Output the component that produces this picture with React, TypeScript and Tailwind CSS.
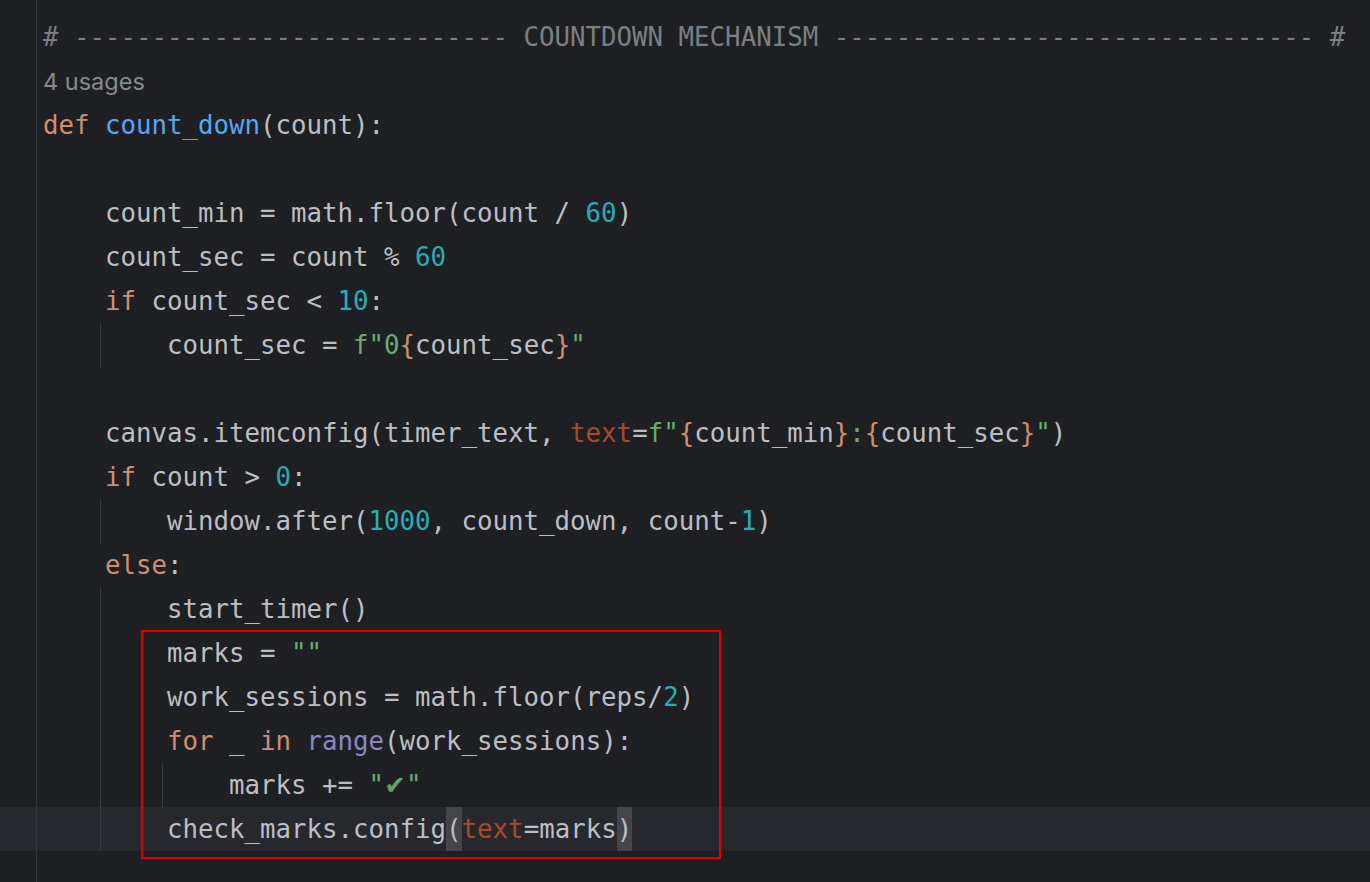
import React from "react";

type Tok = [string, string?];

const C = {
  kw: "text-[#cf8e6d]",
  fn: "text-[#56a8f5]",
  num: "text-[#2aacb8]",
  str: "text-[#6aab73]",
  brace: "text-[#cf8e6d]",
  arg: "text-[#aa4926]",
  builtin: "text-[#8888c6]",
  cmt: "text-[#7a7e85]",
};

const t = (s: string, c?: string): Tok => [s, c];

const header =
  "# " + "-".repeat(28) + " COUNTDOWN MECHANISM " + "-".repeat(31) + " #";

const lines: { indent: number; toks: Tok[]; guides?: number[]; current?: boolean; hint?: string }[] = [
  { indent: 0, toks: [t(header, C.cmt)] },
  { indent: 0, toks: [], hint: "4 usages" },
  { indent: 0, toks: [t("def ", C.kw), t("count_down", C.fn), t("(count):")] },
  { indent: 0, toks: [] },
  { indent: 1, toks: [t("count_min = math.floor(count / "), t("60", C.num), t(")")] },
  { indent: 1, toks: [t("count_sec = count % "), t("60", C.num)] },
  { indent: 1, toks: [t("if ", C.kw), t("count_sec < "), t("10", C.num), t(":")] },
  {
    indent: 2,
    guides: [1],
    toks: [t("count_sec = "), t('f"0', C.str), t("{", C.brace), t("count_sec"), t("}", C.brace), t('"', C.str)],
  },
  { indent: 0, toks: [] },
  {
    indent: 1,
    toks: [
      t("canvas.itemconfig(timer_text, "),
      t("text", C.arg),
      t("="),
      t('f"', C.str),
      t("{", C.brace),
      t("count_min"),
      t("}", C.brace),
      t(":", C.str),
      t("{", C.brace),
      t("count_sec"),
      t("}", C.brace),
      t('"', C.str),
      t(")"),
    ],
  },
  { indent: 1, toks: [t("if ", C.kw), t("count > "), t("0", C.num), t(":")] },
  {
    indent: 2,
    guides: [1],
    toks: [t("window.after("), t("1000", C.num), t(", count_down, count-"), t("1", C.num), t(")")],
  },
  { indent: 1, toks: [t("else", C.kw), t(":")] },
  { indent: 2, guides: [1], toks: [t("start_timer()")] },
  { indent: 2, guides: [1], toks: [t("marks = "), t('""', C.str)] },
  { indent: 2, guides: [1], toks: [t("work_sessions = math.floor(reps/"), t("2", C.num), t(")")] },
  {
    indent: 2,
    guides: [1],
    toks: [t("for ", C.kw), t("_ "), t("in ", C.kw), t("range", C.builtin), t("(work_sessions):")],
  },
  { indent: 3, guides: [1, 2], toks: [t("marks += "), t('"', C.str), t("CHECK"), t('"', C.str)] },
  {
    indent: 2,
    guides: [1],
    current: true,
    toks: [t("check_marks.config"), t("(", "MATCH"), t("text", C.arg), t("=marks"), t(")", "MATCH")],
  },
];

function Token({ tok }: { tok: Tok }) {
  const [s, c] = tok;
  if (s === "CHECK") {
    return <span className="inline-block w-[22px] text-center text-[#5fa36b] font-['DejaVu_Sans',sans-serif]">✔</span>;
  }
  if (c === "MATCH") {
    return <span className="inline-block bg-[#43454a]">{s}</span>;
  }
  return <span className={c}>{s}</span>;
}

export default function App() {
  return (
    <div className="relative flex h-[882px] w-[1370px] flex-col overflow-hidden bg-[#1e1f22] text-[#bcbec4] font-['DejaVu_Sans_Mono',monospace] text-[25.75px] leading-[44px]">
      <div className="flex h-[15px] shrink-0">
        <div className="w-[36px] shrink-0" />
        <div className="flex-1 border-l border-[#313438]" />
      </div>

      {lines.map((ln, i) => (
        <div key={i} className={`flex h-[44px] shrink-0 ${ln.current ? "bg-[#26282e]" : ""}`}>
          <div className="w-[36px] shrink-0" />
          <div className="relative flex-1 whitespace-pre border-l border-[#313438] pl-[6px]">
            {ln.guides?.map((g) => (
              <span
                key={g}
                className={`absolute top-0 h-[44px] w-[1px] bg-[#393b40] ${g === 1 ? "left-[63px]" : "left-[125px]"}`}
              />
            ))}
            {ln.hint ? (
              <span className="font-['Inter',sans-serif] text-[23.5px] text-[#868a91]">{ln.hint}</span>
            ) : (
              <>
                <span>{"    ".repeat(ln.indent)}</span>
                {ln.toks.map((tk, j) => (
                  <Token key={j} tok={tk} />
                ))}
              </>
            )}
          </div>
        </div>
      ))}

      <div className="flex flex-1">
        <div className="w-[36px] shrink-0" />
        <div className="flex-1 border-l border-[#313438]" />
      </div>

      <div className="pointer-events-none absolute left-[141px] top-[630px] h-[229px] w-[580px] border-2 border-[#e00000]" />
    </div>
  );
}
